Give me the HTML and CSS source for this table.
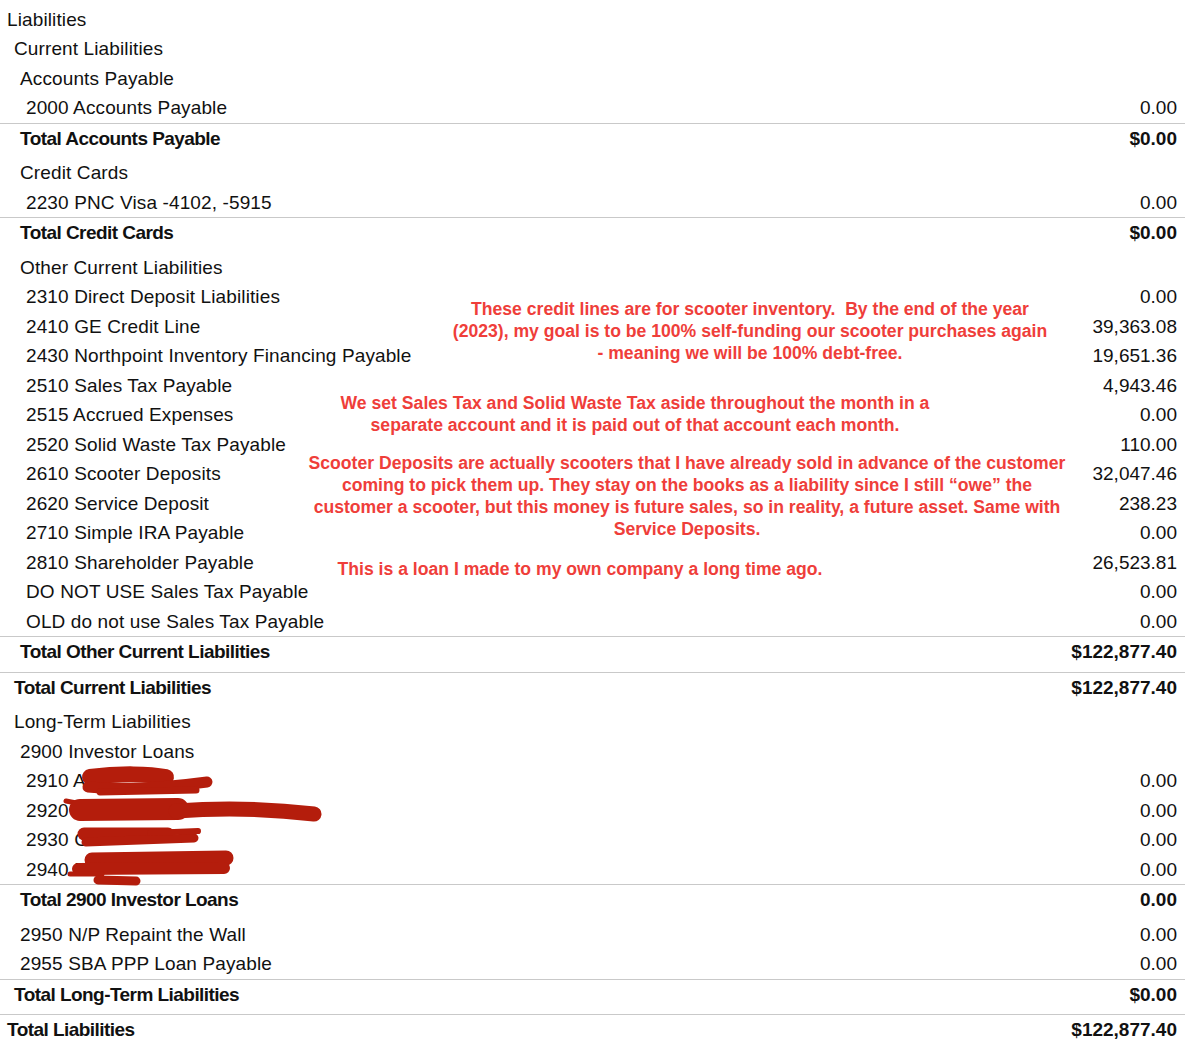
FILE: index.html
```html
<!DOCTYPE html>
<html lang="en">
<head>
  <meta charset="UTF-8" />
  <title>Balance Sheet - Liabilities</title>
  <link rel="stylesheet" href="styles.css">
</head>
<body>
  <div class="report">
    <div class="row l0"><span class="name">Liabilities</span></div>
    <div class="row l1"><span class="name">Current Liabilities</span></div>
    <div class="row l2"><span class="name">Accounts Payable</span></div>
    <div class="row l3"><span class="name">2000 Accounts Payable</span><span class="amt">0.00</span></div>
    <div class="row total l2"><span class="name">Total Accounts Payable</span><span class="amt">$0.00</span></div>

    <div class="row l2"><span class="name">Credit Cards</span></div>
    <div class="row l3"><span class="name">2230 PNC Visa -4102, -5915</span><span class="amt">0.00</span></div>
    <div class="row total l2"><span class="name">Total Credit Cards</span><span class="amt">$0.00</span></div>

    <div class="row l2"><span class="name">Other Current Liabilities</span></div>
    <div class="row l3"><span class="name">2310 Direct Deposit Liabilities</span><span class="amt">0.00</span></div>
    <div class="row l3"><span class="name">2410 GE Credit Line</span><span class="amt">39,363.08</span></div>
    <div class="row l3"><span class="name">2430 Northpoint Inventory Financing Payable</span><span class="amt">19,651.36</span></div>
    <div class="row l3"><span class="name">2510 Sales Tax Payable</span><span class="amt">4,943.46</span></div>
    <div class="row l3"><span class="name">2515 Accrued Expenses</span><span class="amt">0.00</span></div>
    <div class="row l3"><span class="name">2520 Solid Waste Tax Payable</span><span class="amt">110.00</span></div>
    <div class="row l3"><span class="name">2610 Scooter Deposits</span><span class="amt">32,047.46</span></div>
    <div class="row l3"><span class="name">2620 Service Deposit</span><span class="amt">238.23</span></div>
    <div class="row l3"><span class="name">2710 Simple IRA Payable</span><span class="amt">0.00</span></div>
    <div class="row l3"><span class="name">2810 Shareholder Payable</span><span class="amt">26,523.81</span></div>
    <div class="row l3"><span class="name">DO NOT USE Sales Tax Payable</span><span class="amt">0.00</span></div>
    <div class="row l3"><span class="name">OLD do not use Sales Tax Payable</span><span class="amt">0.00</span></div>
    <div class="row total l2"><span class="name">Total Other Current Liabilities</span><span class="amt">$122,877.40</span></div>
    <div class="row total l1"><span class="name">Total Current Liabilities</span><span class="amt">$122,877.40</span></div>

    <div class="row l1"><span class="name">Long-Term Liabilities</span></div>
    <div class="row l2"><span class="name">2900 Investor Loans</span></div>
    <div class="row l3"><span class="name">2910 A</span><span class="amt">0.00</span></div>
    <div class="row l3"><span class="name">2920 G</span><span class="amt">0.00</span></div>
    <div class="row l3"><span class="name">2930 C</span><span class="amt">0.00</span></div>
    <div class="row l3"><span class="name">2940 F</span><span class="amt">0.00</span></div>
    <div class="row total l2"><span class="name">Total 2900 Investor Loans</span><span class="amt">0.00</span></div>
    <div class="row l2"><span class="name">2950 N/P Repaint the Wall</span><span class="amt">0.00</span></div>
    <div class="row l2"><span class="name">2955 SBA PPP Loan Payable</span><span class="amt">0.00</span></div>
    <div class="row total l1"><span class="name">Total Long-Term Liabilities</span><span class="amt">$0.00</span></div>
    <div class="row total l0"><span class="name">Total Liabilities</span><span class="amt">$122,877.40</span></div>

    <!-- notes written over the report -->
    <div class="note note-credit">These credit lines are for scooter inventory.&nbsp; By the end of the year<br>(2023), my goal is to be 100% self-funding our scooter purchases again<br>- meaning we will be 100% debt-free.</div>
    <div class="note note-tax">We set Sales Tax and Solid Waste Tax aside throughout the month in a<br>separate account and it is paid out of that account each month.</div>
    <div class="note note-deposit">Scooter Deposits are actually scooters that I have already sold in advance of the customer<br>coming to pick them up. They stay on the books as a liability since I still “owe” the<br>customer a scooter, but this money is future sales, so in reality, a future asset. Same with<br>Service Deposits.</div>
    <div class="note note-loan">This is a loan I made to my own company a long time ago.</div>

    <svg class="redact" width="340" height="900" viewBox="0 0 340 900">
      <g fill="none" stroke="#b41d0c" stroke-linecap="round">
        <path d="M90 777 C120 773 150 774 166 777" stroke-width="16"/>
        <path d="M88 787 C130 791 170 787 207 782" stroke-width="11"/>
        <path d="M100 792 L196 790" stroke-width="7"/>

        <path d="M66 801 L92 806" stroke-width="5"/>
        <path d="M80 810 L178 809" stroke-width="22"/>
        <path d="M176 811 C230 807 280 810 314 814" stroke-width="15"/>

        <path d="M84 834 L168 834" stroke-width="13"/>
        <path d="M86 842 L194 838" stroke-width="9"/>
        <path d="M150 833 L198 831" stroke-width="6"/>

        <path d="M92 860 L226 858" stroke-width="15"/>
        <path d="M78 869 L224 868" stroke-width="12"/>
        <path d="M70 874 L102 874" stroke-width="5"/>
        <path d="M98 880 L136 881" stroke-width="9"/>
      </g>
    </svg>
  </div>
</body>
</html>
```

FILE: styles.css
```css
body { margin: 0; background: #fff; color: #111; font-family: "Liberation Sans", Arial, Helvetica, sans-serif; }
.report { position: relative; width: 1185px; padding-top: 4.75px; }

.row { display: flex; justify-content: space-between; height: 29.5px; line-height: 29.5px; font-size: 19px; padding-right: 8px; white-space: nowrap; }
.name { letter-spacing: 0.12px; }
.total { border-top: 1px solid #c9c9c9; padding-bottom: 5px; font-weight: bold; }
.total .name { letter-spacing: -0.55px; }

.l0 { padding-left: 7px; }
.l1 { padding-left: 14px; }
.l2 { padding-left: 20px; }
.l3 { padding-left: 26px; }

.note {
  position: absolute; transform: translateX(-50%);
  color: #ef3e3a; font-weight: bold; font-size: 17.6px; line-height: 22px;
  text-align: center; white-space: nowrap;
}
.note-credit { left: 750px; top: 298px; }
.note-tax { left: 635px; top: 392px; }
.note-deposit { left: 687px; top: 452px; }
.note-loan { left: 580px; top: 558px; }

.redact { position: absolute; left: 0; top: 0; pointer-events: none; }
```
